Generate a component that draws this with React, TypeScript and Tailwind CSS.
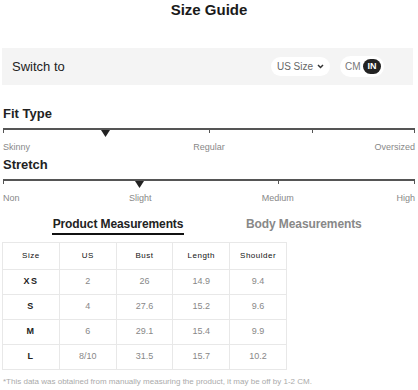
const rows = [
  ["XS", "2", "26", "14.9", "9.4"],
  ["S", "4", "27.6", "15.2", "9.6"],
  ["M", "6", "29.1", "15.4", "9.9"],
  ["L", "8/10", "31.5", "15.7", "10.2"],
];

function Scale({
  ticks,
  marker,
  labels,
}: {
  ticks: number[];
  marker: number;
  labels: { text: string; pos: number; align: "left" | "center" | "right" }[];
}) {
  return (
    <div className="mx-[3px]">
      <div className="relative h-[10px]">
        <div className="h-[2px] bg-[#555]" />
        {ticks.map((t) => (
          <div
            key={t}
            className="absolute top-0 w-[1px] h-[5px] bg-[#555]"
            style={{ left: `calc(${t}% - ${t === 100 ? 1 : 0}px)` }}
          />
        ))}
        <svg
          className="absolute top-[2px]"
          style={{ left: `calc(${marker}% - 4px)` }}
          width="9"
          height="7"
          viewBox="0 0 9 7"
        >
          <path d="M0 0H9L4.5 7Z" fill="#222" />
        </svg>
      </div>
      <div className="relative h-[14px] mt-[3px] text-[9px] text-[#888]">
        {labels.map((l) => (
          <span
            key={l.text}
            className="absolute top-0"
            style={
              l.align === "left"
                ? { left: 0 }
                : l.align === "right"
                  ? { right: 0 }
                  : { left: `${l.pos}%`, transform: "translateX(-50%)" }
            }
          >
            {l.text}
          </span>
        ))}
      </div>
    </div>
  );
}

export default function App() {
  return (
    <div
      className="w-[418px] h-[390px] bg-white overflow-hidden"
      style={{ fontFamily: '"Liberation Sans", Arial, sans-serif' }}
    >
      <h1 className="text-center text-[15px] font-bold leading-[17px] text-[#1a1a1a] pt-[1px]">Size Guide</h1>

      <div className="mt-[30px] mx-[2px] w-[411px] h-[37px] bg-[#f4f4f4] flex items-center pl-[10px] pr-[29px]">
        <span className="text-[13px] text-[#222]">Switch to</span>
        <div className="ml-auto flex items-center gap-[10px]">
          <div className="h-[19px] w-[59px] rounded-full bg-white flex items-center justify-center gap-[4px] text-[10px] text-[#666]">
            US Size
            <svg width="7" height="5" viewBox="0 0 7 5">
              <path d="M1 1L3.5 3.5L6 1" stroke="#333" strokeWidth="1.5" fill="none" />
            </svg>
          </div>
          <div className="h-[21px] w-[44px] rounded-full bg-white flex items-center pl-[5px] pr-[3px] text-[10px]">
            <span className="text-[#777]">CM</span>
            <span className="ml-auto h-[15px] w-[18px] rounded-full bg-[#222] text-white font-bold text-[9px] flex items-center justify-center">
              IN
            </span>
          </div>
        </div>
      </div>

      <h2 className="mt-[21px] ml-[3px] text-[13px] font-semibold leading-[16px] text-[#222]">Fit Type</h2>
      <div className="mt-[6px]">
        <Scale
          ticks={[0, 50, 75, 100]}
          marker={24.7}
          labels={[
            { text: "Skinny", pos: 0, align: "left" },
            { text: "Regular", pos: 50, align: "center" },
            { text: "Oversized", pos: 100, align: "right" },
          ]}
        />
      </div>

      <h2 className="mt-[2px] ml-[3px] text-[13px] font-semibold leading-[16px] text-[#222]">Stretch</h2>
      <div className="mt-[6px]">
        <Scale
          ticks={[0, 66.7, 100]}
          marker={33}
          labels={[
            { text: "Non", pos: 0, align: "left" },
            { text: "Slight", pos: 33.3, align: "center" },
            { text: "Medium", pos: 66.7, align: "center" },
            { text: "High", pos: 100, align: "right" },
          ]}
        />
      </div>

      <div className="mt-[10px] flex items-start text-[12px] font-bold leading-[16px] whitespace-nowrap">
        <div className="ml-[52px] w-[132px] pb-[1px] border-b-2 border-[#111] text-[#222] text-center tracking-[-0.1px]">
          Product Measurements
        </div>
        <div className="ml-[62px] text-[#888] tracking-[-0.1px]">Body Measurements</div>
      </div>

      <table className="mt-[7px] ml-[2px] w-[285px] border-collapse table-fixed text-center">
        <thead>
          <tr className="h-[27px]">
            {["Size", "US", "Bust", "Length", "Shoulder"].map((h) => (
              <th key={h} className="border border-[#e8e8e8] text-[8px] font-normal text-[#111] tracking-[0.5px]">
                {h}
              </th>
            ))}
          </tr>
        </thead>
        <tbody>
          {rows.map((r) => (
            <tr key={r[0]} className="h-[25px]">
              {r.map((c, i) => (
                <td
                  key={i}
                  className={
                    i === 0
                      ? "border border-[#e8e8e8] text-[9px] text-[#222] font-bold tracking-[1.5px]"
                      : "border border-[#e8e8e8] text-[9px] text-[#888]"
                  }
                >
                  {c}
                </td>
              ))}
            </tr>
          ))}
        </tbody>
      </table>

      <p className="mt-[7px] ml-[3px] text-[8px] leading-[10px] text-[#aaa]">
        *This data was obtained from manually measuring the product, it may be off by 1-2 CM.
      </p>
    </div>
  );
}
